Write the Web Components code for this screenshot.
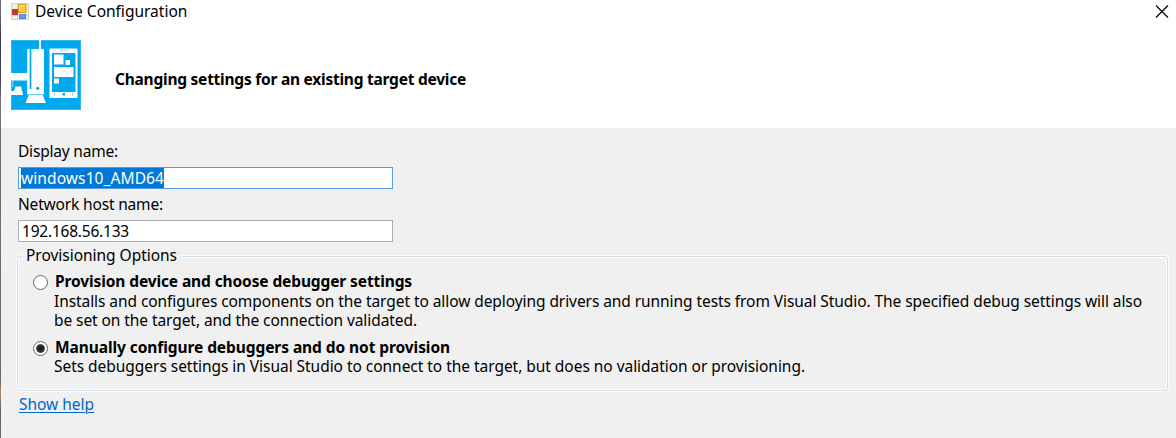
<!DOCTYPE html>
<html lang="en">
<head>
<meta charset="utf-8">
<title>Device Configuration</title>
<style>
html,body{margin:0;height:100%;overflow:hidden;background:#f0f0f0}
body{font:15.5px/20px "Noto Sans","Open Sans",sans-serif;color:#000}
</style>
</head>
<body>
<device-dialog></device-dialog>
<script>
const define = (name, html, ready) => customElements.define(name, class extends HTMLElement {
  connectedCallback() {
    if (this.shadowRoot) return;
    const t = document.createElement('template');
    t.innerHTML = html;
    this.attachShadow({mode: 'open'}).appendChild(t.content.cloneNode(true));
    if (ready) ready(this);
  }
});

// A single line whose tracking is adjusted to occupy a given width.
define('fit-text', `<style>:host{display:block;height:20px;line-height:20px;white-space:nowrap}span{display:inline-block;vertical-align:top;text-decoration:inherit}</style><span><slot></slot></span>`, el => {
  const span = el.shadowRoot.querySelector('span');
  const n = el.textContent.length;
  const w = span.getBoundingClientRect().width;
  span.style.letterSpacing = ((+el.getAttribute('w') - w) / n).toFixed(4) + 'px';
});

define('app-icon', `<style>:host{display:block;width:18px;height:17px}svg{display:block}</style>
<svg width="18" height="17" viewBox="0 0 18 17">
<rect x=".5" y=".5" width="17" height="16" fill="#f1f1f1" stroke="#d2d2d2"/>
<path d="M6.5 1v15M1 6.5h6M1 12.5h16M12.5 11v5" stroke="#d6d6d6" fill="none"/>
<rect x="1.5" y="6.5" width="5" height="5" fill="#c8372d" stroke="#b5453d"/>
<rect x="7.500" y="1.500" width="7.500" height="8" fill="#fccd3c" stroke="#cf9c1c"/>
<path d="M8.500 8V2.500H14" stroke="#ffe993" fill="none"/>
<rect x="8.500" y="11.500" width="6" height="4" fill="#5c9cf2" stroke="#4c86dc"/>
</svg>`);

define('device-logo', `<style>:host{display:block;width:70px;height:70px}svg{display:block}</style>
<svg width="70" height="70" viewBox="0 0 70 70">
<rect x=".5" y=".5" width="69" height="69" fill="#00a8ee" stroke="#2fb8f2"/>
<g fill="#fff">
<path d="M28 0h2v9h3v45H16.200V40.500H0V33h16.200V9H28z"/>
<path d="M18 54.500h13.500L35 63H14.500z"/>
<path fill-rule="evenodd" d="M39.500 8.500h26q1 0 1 1V58h-28V9.500q0-1 1-1zM41 13v39h23.500V13z"/>
<path d="M43 14.500h9.500v10H43zM54.500 20h4.500v5h-4.500zM43 27h19.500v10H43zM43 38.500h5v5h-5z"/>
<path d="M0 51h3l1.500-4.500h5.500l2 8.500H0z"/>
</g>
<path d="M1.800 41v6" stroke="#9addf9"/>
<path d="M19.500 9v40" stroke="#00a8ee" stroke-width="1.700"/>
<path d="M16 54.500h17" stroke="#70cef6"/>
<circle cx="26.700" cy="48.300" r="1.600" fill="#00a8ee"/>
<path d="M49 10.300h7" stroke="#9addf9"/>
<rect x="51.500" y="53" width="2.500" height="2.500" fill="#00a8ee"/>
<path d="M43.500 53v2.500M61.500 53v2.500" stroke="#70cef6"/>
</svg>`);

define('title-bar', `<style>:host{display:flex;height:24px;padding:1px 8px 0 10px;box-sizing:border-box;align-items:flex-start}
app-icon{margin:2px 6px 0 0}svg{margin:4px -1px 0 auto;display:block}</style>
<app-icon></app-icon><fit-text w="154"><slot></slot></fit-text>
<svg width="14" height="13" viewBox="0 0 14 13"><path d="M1 .5l12 12M13 .5l-12 12" stroke="#000" stroke-width="1.150"/></svg>`);

define('dialog-header', `<style>:host{display:block;height:128px;background:#fff}
.row{display:flex;padding:16px 0 0 10px}fit-text{font-weight:bold;margin:29px 0 0 34px}</style>
<title-bar>Device Configuration</title-bar>
<div class="row"><device-logo></device-logo><fit-text w="351">Changing settings for an existing target device</fit-text></div>`);

define('text-field', `<style>:host{display:block;height:53px}
.box{width:375px;height:22px;box-sizing:border-box;border:1px solid #abadb3;background:#fff;margin-top:6px;padding-left:2px;display:flex}
:host([selected]) .box{border-color:#569de5}
.value{height:20px;padding-left:1px}
:host([selected]) .value{background:#0078d7;color:#fff;padding:0}
</style><slot name="label"></slot><div class="box"><div class="value"><slot name="value"></slot></div></div>`);

define('radio-option', `<style>:host{display:flex;align-items:flex-start}
i{display:block;flex:none;width:15px;height:15px;box-sizing:border-box;border:1px solid #666;border-radius:50%;background:#fff;margin:4px 7px 0 0;padding:3px}
:host([checked]) i::before{content:"";display:block;width:7px;height:7px;border-radius:50%;background:#222;outline:.5px solid #222}
.title{font-weight:bold}.desc{margin-left:-1px}</style>
<i></i><div><div class="title"><slot name="title"></slot></div><div class="desc"><slot></slot></div></div>`);

define('option-group', `<style>:host{display:block;height:135px;box-sizing:border-box;border:1px solid #d5dfe8;border-radius:4px;box-shadow:0 0 0 1px #fafbfc,inset 0 0 0 1px #fff;padding:0 0 0 15px}
.legend{width:158px;box-sizing:border-box;height:20px;margin:-12px 0 0 -10px;padding-left:3px;background:#f0f0f0}
.items{padding-top:6px}</style>
<div class="legend"><slot name="legend"></slot></div><div class="items"><slot></slot></div>`);

define('device-dialog', `<style>:host{display:grid;grid-template-columns:1px 1fr;height:438px}
.edge{background:linear-gradient(#686775 0 18px,#34374a 38px,#44475a 80px,#77747a 100px,#6d6a72 140px,#77706f 230px,#696a70 380px,#a88c6c 392px,#73706f 405px,#6d514b 414px,#686971 425px)}
main{display:block;min-width:0;background:#f0f0f0}
.body{padding:13px 8px 0 17px}
option-group{margin:9px 0 0 -1px}
.d{height:18px;line-height:18px}
.d:nth-child(2){margin-top:1px}
.d+.d{margin-top:1px}
radio-option>.first{margin-top:1px}
radio-option>.only{margin-top:0}
radio-option+radio-option{margin-top:8px}
.help{color:#0066cc;text-decoration:underline;text-underline-offset:2px;text-decoration-thickness:1px;margin:3px 0 0 1px}
</style><div class="edge"></div><main><dialog-header></dialog-header><div class="body">
<text-field selected><fit-text slot="label" w="100">Display name:</fit-text><fit-text slot="value" w="143">windows10_AMD64</fit-text></text-field>
<text-field><fit-text slot="label" w="145">Network host name:</fit-text><fit-text slot="value" w="107">192.168.56.133</fit-text></text-field>
<option-group><fit-text slot="legend" w="151">Provisioning Options</fit-text>
<radio-option><fit-text slot="title" w="357">Provision device and choose debugger settings</fit-text><fit-text class="d first" w="1088">Installs and configures components on the target to allow deploying drivers and running tests from Visual Studio. The specified debug settings will also</fit-text><fit-text class="d" w="363">be set on the target, and the connection validated.</fit-text></radio-option>
<radio-option checked><fit-text slot="title" w="395">Manually configure debuggers and do not provision</fit-text><fit-text class="d only" style="margin-top:0" w="751">Sets debuggers settings in Visual Studio to connect to the target, but does no validation or provisioning.</fit-text></radio-option>
</option-group>
<fit-text class="help" w="75">Show help</fit-text>
</div></main>`);
</script>
</body>
</html>
